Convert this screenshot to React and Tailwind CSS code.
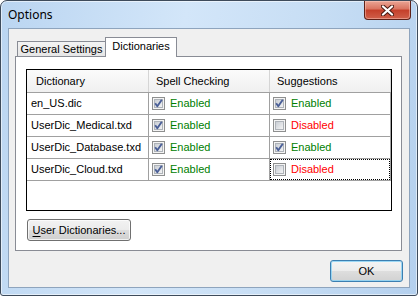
import React from 'react'

const rows = [
  { name: 'en_US.dic', spell: true, sugg: true },
  { name: 'UserDic_Medical.txd', spell: true, sugg: false },
  { name: 'UserDic_Database.txd', spell: true, sugg: true },
  { name: 'UserDic_Cloud.txd', spell: true, sugg: false, focus: true },
]

function Check({ checked }) {
  return (
    <svg width="13" height="13" viewBox="0 0 13 13" className="shrink-0">
      <defs>
        <linearGradient id="cbfill" x1="0" y1="0" x2="1" y2="1">
          <stop offset="0" stopColor="#c6cbd2" />
          <stop offset="1" stopColor="#f6f6f6" />
        </linearGradient>
      </defs>
      <rect x="0.5" y="0.5" width="12" height="12" fill="#f4f4f4" stroke="#8e8f8f" />
      <rect x="2.5" y="2.5" width="8" height="8" fill="url(#cbfill)" stroke="#aeb3b9" />
      {checked && (
        <path d="M3.2 6.3 L5.3 9.2 L9.8 2.8" fill="none" stroke="#4a5f97" strokeWidth="1.9" strokeLinejoin="round" />
      )}
    </svg>
  )
}

function State({ on }) {
  return (
    <div className="flex items-center gap-[5px] pl-[3px]">
      <Check checked={on} />
      <span className={on ? 'text-[#008000]' : 'text-[#ff0000]'}>{on ? 'Enabled' : 'Disabled'}</span>
    </div>
  )
}

export default function App() {
  return (
    <div
      className="w-[418px] h-[296px] flex flex-col rounded-t-[7px] rounded-b-[3px] border border-[#3e4b5b] bg-[linear-gradient(100deg,#bad5f1_0%,#d3e6f9_40%,#c6ddf4_70%,#b4d0ee_100%)] shadow-[inset_0_0_0_1px_rgba(255,255,255,0.55)]"
      style={{ fontFamily: '"Liberation Sans", Arial, sans-serif' }}
    >
      {/* title bar */}
      <div className="h-[27px] flex items-start justify-between shrink-0">
        <span className="pl-[7px] pt-[5px] text-[12px] text-black" style={{ fontFamily: '"Noto Sans", sans-serif' }}>
          Options
        </span>
        <div className="mr-[6px] w-[47px] h-[19px] rounded-b-[4px] border border-t-0 border-[#5e2118] bg-[linear-gradient(to_bottom,#eaa595_0%,#d9735f_45%,#c43f2a_50%,#d0604a_100%)] shadow-[inset_0_0_0_1px_rgba(255,210,200,0.45)] flex items-center justify-center">
          <svg width="13" height="11" viewBox="0 0 13 11">
            <path d="M2 1.5 L11 9.5 M11 1.5 L2 9.5" stroke="#4a1a12" strokeWidth="4.2" strokeLinecap="round" />
            <path d="M2 1.5 L11 9.5 M11 1.5 L2 9.5" stroke="#ffffff" strokeWidth="2.3" strokeLinecap="round" />
          </svg>
        </div>
      </div>

      {/* client area */}
      <div className="flex-1 mx-[7px] mb-[7px] border border-[#8ea4bd] bg-[#f0f0f0] px-[6px] pt-[8px] flex flex-col text-[11px] text-black">
        {/* tabs */}
        <div className="flex items-end h-[20px] pl-[2px] mr-px">
          <div className="w-[89px] h-[16px] border border-b-0 border-[#898c95] bg-[linear-gradient(to_bottom,#f3f3f3,#e5e5e5)] flex items-center justify-center leading-none">
            General Settings
          </div>
          <div className="relative z-10 -ml-px w-[72px] h-[20px] border border-b-0 border-[#898c95] bg-white flex items-start justify-center pt-[3px] leading-none">
            Dictionaries
          </div>
        </div>

        <div className="-mt-px mr-px h-[195px] border border-[#898c95] bg-white pl-[10px] pt-[12px] flex flex-col">
          {/* grid */}
          <div className="w-[366px] h-[142px] border border-black bg-white flex flex-col">
            <div className="flex h-[23px] border-b border-[#a0a0a0] bg-[linear-gradient(to_bottom,#fbfbfb,#f0f0f0)]">
              <div className="w-[122px] border-r border-[#d5d5d5] flex items-center pl-[9px]">Dictionary</div>
              <div className="w-[121px] border-r border-[#d5d5d5] flex items-center pl-[7px]">Spell Checking</div>
              <div className="w-[121px] border-r border-[#d5d5d5] flex items-center pl-[7px]">Suggestions</div>
            </div>
            {rows.map((r) => (
              <div key={r.name} className="flex h-[22px] border-b border-[#a0a0a0]">
                <div className="w-[122px] border-r border-[#a0a0a0] flex items-center pl-[4px]">{r.name}</div>
                <div className="w-[121px] border-r border-[#a0a0a0] flex items-center">
                  <State on={r.spell} />
                </div>
                <div className="relative w-[121px] border-r border-[#a0a0a0] flex items-center">
                  <State on={r.sugg} />
                  {r.focus && <div className="absolute inset-0 border border-dotted border-black" />}
                </div>
              </div>
            ))}
          </div>

          <button className="mt-[8px] ml-px w-[104px] h-[22px] rounded-[3px] border border-[#707070] bg-[linear-gradient(to_bottom,#f2f2f2_0%,#ebebeb_50%,#dddddd_50%,#cfcfcf_100%)] shadow-[inset_0_0_0_1px_rgba(255,255,255,0.7)] text-[11px] text-black leading-none">
            <span className="underline underline-offset-2">U</span>ser Dictionaries...
          </button>
        </div>

        <div className="flex justify-end mt-[9px]">
          <button className="w-[73px] h-[22px] rounded-[3px] border border-[#3c7fb1] bg-[linear-gradient(to_bottom,#f4f4f4_0%,#ececec_50%,#dedede_50%,#d2d2d2_100%)] shadow-[inset_0_0_0_1px_rgba(140,210,245,0.85)] text-[11px] text-black leading-none">
            OK
          </button>
        </div>
      </div>
    </div>
  )
}
